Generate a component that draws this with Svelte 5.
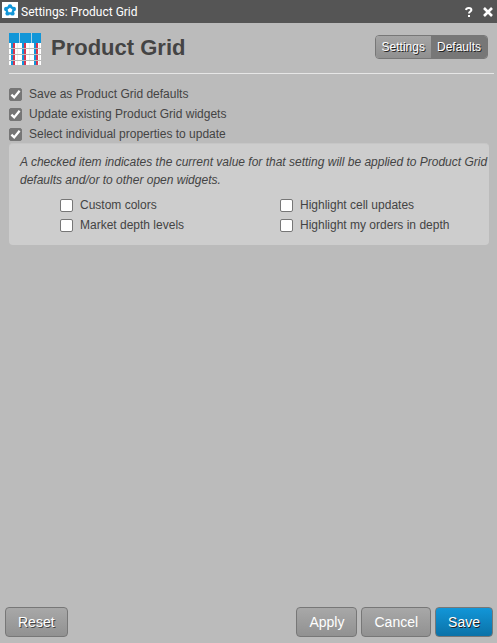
<script>
  let target = $state('defaults');

  let scopes = $state([
    { label: 'Save as Product Grid defaults', checked: true },
    { label: 'Update existing Product Grid widgets', checked: true },
    { label: 'Select individual properties to update', checked: true }
  ]);

  let properties = $state([
    { label: 'Custom colors', checked: false },
    { label: 'Highlight cell updates', checked: false },
    { label: 'Market depth levels', checked: false },
    { label: 'Highlight my orders in depth', checked: false }
  ]);

  function reset() {
    for (const p of properties) p.checked = false;
  }
</script>

<div class="window">
  <header class="titlebar">
    <svg class="app-icon" width="16" height="16" viewBox="0 0 16 16">
      <rect width="16" height="16" fill="#fff" />
      <g fill="#1296d8">
        <circle cx="8" cy="4.4" r="2.2" />
        <circle cx="11.8" cy="7" r="2.2" />
        <circle cx="10.4" cy="11.4" r="2.2" />
        <circle cx="5.6" cy="11.4" r="2.2" />
        <circle cx="4.2" cy="7" r="2.2" />
        <circle cx="8" cy="8.2" r="4.4" />
      </g>
      <path d="M8 5.8L10.4 7.5L9.5 10.2H6.5L5.6 7.5Z" fill="#fff" />
    </svg>
    <span class="caption">Settings: Product Grid</span>
    <button class="tool" aria-label="Help">
      <svg width="8" height="10" viewBox="0 0 8 10" fill="none" stroke="#fff" stroke-width="2">
        <path d="M1 3C1.2 1.6 2.3 1 3.8 1C5.4 1 6.4 1.7 6.4 2.9C6.4 4.6 4 4.5 4 6.6M4 8V10" />
      </svg>
    </button>
    <button class="tool" aria-label="Close">
      <svg width="10" height="10" viewBox="0 0 10 10" stroke="#fff" stroke-width="2.6">
        <path d="M1 1L9 9M9 1L1 9" />
      </svg>
    </button>
  </header>

  <main>
    <div class="heading">
      <svg class="grid-icon" width="32" height="32" viewBox="0 0 32 32" shape-rendering="crispEdges">
        <rect width="32" height="32" fill="#fff" />
        <rect width="32" height="10" fill="#1296d8" />
        <path d="M10.5 0V10M22.5 0V10" stroke="#a9cfe3" />
        <path d="M8.5 10V32M20.5 10V32M30.5 10V32" stroke="#eee" />
        <path d="M2 10H4V32H2ZM13 10H15V32H13ZM25 10H27V32H25Z" fill="#1296d8" />
        <path d="M4 10H6V32H4ZM15 10H17V32H15ZM27 10H29V32H27Z" fill="#d8344f" />
        <path d="M0 15.5H32M0 21.5H32M0 27.5H32" stroke="#bbb" />
      </svg>
      <h1>Product Grid</h1>
      <div class="segmented">
        <button class:active={target === 'settings'} onclick={() => (target = 'settings')}>Settings</button>
        <button class:active={target === 'defaults'} onclick={() => (target = 'defaults')}>Defaults</button>
      </div>
    </div>

    <div class="scopes">
      {#each scopes as scope}
        <label class="check">
          <input type="checkbox" bind:checked={scope.checked} />
          {scope.label}
        </label>
      {/each}
    </div>

    <section class="panel">
      <p>A checked item indicates the current value for that setting will be applied to Product Grid defaults and/or to other open widgets.</p>
      <div class="properties">
        {#each properties as property}
          <label class="check">
            <input type="checkbox" bind:checked={property.checked} />
            {property.label}
          </label>
        {/each}
      </div>
    </section>
  </main>

  <footer>
    <button class="btn reset" onclick={reset}>Reset</button>
    <button class="btn">Apply</button>
    <button class="btn">Cancel</button>
    <button class="btn primary">Save</button>
  </footer>
</div>

<style>
  :global(body) {
    margin: 0;
    background: #bbb;
  }

  .window {
    display: flex;
    flex-direction: column;
    min-height: 100vh;
    box-sizing: border-box;
    background: #bbb;
    color: #444;
    font-family: "Liberation Sans", Arial, sans-serif;
    font-size: 12px;
  }

  .titlebar {
    display: flex;
    align-items: center;
    gap: 10px;
    height: 23px;
    padding: 0 4px 0 2px;
    background: #555;
    color: #fff;
  }

  .app-icon {
    align-self: flex-start;
    margin-top: 2px;
  }

  .caption {
    flex: 1;
    margin-left: -7px;
    font-family: Roboto, sans-serif;
    font-size: 12px;
    line-height: 22px;
  }

  .tool {
    display: flex;
    padding: 0;
    border: none;
    background: none;
    cursor: pointer;
  }

  main {
    flex: 1;
    padding: 0 8px 0 9px;
  }

  .heading {
    display: flex;
    align-items: center;
    margin-right: -5px;
    padding: 10px 6px 8px 0;
    border-bottom: 1px solid #e6e6e6;
  }

  h1 {
    flex: 1;
    margin: 0 0 2px 10px;
    font-size: 22px;
    line-height: 28px;
  }

  .segmented {
    display: flex;
    margin-bottom: 4px;
    border: 1px solid #777;
    border-radius: 4px;
    overflow: hidden;
  }

  .segmented button {
    height: 22px;
    padding: 0 6px;
    border: none;
    background: linear-gradient(#a5a5a5, #909090);
    color: #fff;
    font: inherit;
    text-shadow: 1px 1px 0 #222;
    cursor: pointer;
  }

  .segmented button.active {
    background: #777;
  }

  .scopes {
    padding-top: 10px;
  }

  .check {
    display: flex;
    align-items: center;
    gap: 7px;
    line-height: 20px;
  }

  .check input {
    appearance: none;
    width: 13px;
    height: 13px;
    margin: 1px 0 0;
    box-sizing: border-box;
    border: 1px solid #767676;
    border-radius: 2px;
    background: #fff;
  }

  .check input:checked {
    background: #767676 url("data:image/svg+xml,%3Csvg xmlns='http://www.w3.org/2000/svg' viewBox='0 0 11 11'%3E%3Cpath d='M1.4 5.6L4.2 8.4L9.6 1.8' fill='none' stroke='white' stroke-width='2.3'/%3E%3C/svg%3E") center / 11px 11px no-repeat;
  }

  .panel {
    box-sizing: border-box;
    margin-top: -1px;
    padding: 9px 0 10px 11px;
    border-top: 1px solid #c6c6c6;
    border-radius: 4px;
    background: #cdcdcd;
  }

  .panel p {
    margin: 0 0 6px;
    font-style: italic;
    line-height: 18px;
  }

  .properties {
    display: grid;
    grid-template-columns: 220px 1fr;
    padding-left: 40px;
  }

  footer {
    display: flex;
    gap: 4px;
    padding: 6px 4px 6px 5px;
  }

  .btn {
    height: 30px;
    padding: 0 12px;
    border: 1px solid #777;
    border-radius: 4px;
    background: linear-gradient(#a8a8a8, #919191);
    color: #fff;
    font-family: inherit;
    font-size: 14px;
    cursor: pointer;
  }

  .reset {
    margin-right: auto;
    text-shadow: 1px 1px 0 #444;
  }

  .primary {
    background: linear-gradient(#1296d8, #0b72a8);
    text-shadow: 1px 1px 0 #222;
  }
</style>
